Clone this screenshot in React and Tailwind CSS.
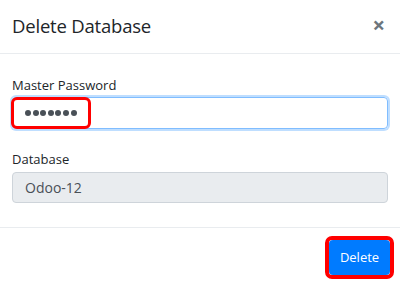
import React from 'react';

export default function App() {
  return (
    <div className="w-[400px] h-[285px] bg-white text-[#212529] overflow-hidden" style={{ fontFamily: '"Open Sans", "Noto Sans", sans-serif' }}>
      {/* Header */}
      <div className="h-[54px] flex items-center justify-between pl-3 pr-[15px] border-b border-[#e9ecef]">
        <h2 className="text-[18.5px] leading-none tracking-[-0.2px]">Delete Database</h2>
        <span className="text-[22px] leading-none text-[#6c757d] font-bold -mt-[6px]">×</span>
      </div>

      {/* Body */}
      <div className="px-3 pt-[21px] pb-6">
        <label className="block text-[13px] leading-5 mb-[2px]">Master Password</label>
        <div className="relative">
          <div className="w-full h-[32px] rounded-[4px] border border-[#80bdff] shadow-[0_0_0_2px_rgba(0,123,255,0.25)] px-3 flex items-center text-[#495057] gap-[1.6px]">
            {Array.from({ length: 7 }).map((_, i) => (
              <span key={i} className="w-[6px] h-[6px] rounded-full bg-[#495057]" />
            ))}
          </div>
          <div className="absolute left-[-1px] top-0 w-[80px] h-[32px] rounded-[6px] border-[3px] border-[#ff0000]" />
        </div>

        <label className="block text-[13px] leading-5 mt-[20px] mb-[3px]">Database</label>
        <div className="h-[31px] rounded-[4px] border border-[#ced4da] bg-[#e9ecef] px-3 flex items-center text-[14px] text-[#495057]">
          Odoo-12
        </div>
      </div>

      {/* Footer */}
      <div className="border-t border-[#e9ecef] flex justify-end pt-[8px] pr-[6px]">
        <div className="rounded-[7px] border-[4px] border-[#ff0000] p-0">
          <button className="h-[35px] w-[61px] rounded-[4px] bg-[#007bff] text-white text-[13px] flex items-center justify-center">
            Delete
          </button>
        </div>
      </div>
    </div>
  );
}
